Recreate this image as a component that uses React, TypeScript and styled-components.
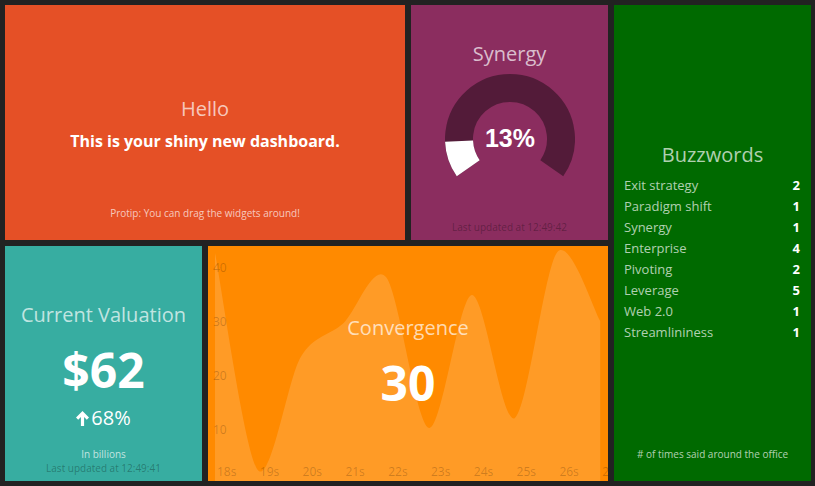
import React from 'react';
import styled, { createGlobalStyle } from 'styled-components';

const GlobalStyle = createGlobalStyle`
  html, body {
    margin: 0;
    background: #222;
  }

  body {
    font-family: "Open Sans", "Liberation Sans", sans-serif;
  }
`;

const Board = styled.div`
  box-sizing: border-box;
  display: grid;
  gap: 6px;
  grid-template-columns: repeat(4, 197px);
  grid-template-rows: repeat(2, 235px);
  min-height: 486px;
  padding: 5px;
`;

const Tile = styled.div<{ $bg: string; $col: string; $row: string }>`
  background-color: ${(p) => p.$bg};
  color: #fff;
  display: grid;
  grid-column: ${(p) => p.$col};
  grid-row: ${(p) => p.$row};
  grid-template-rows: 1fr auto 1fr;
  overflow: hidden;
  position: relative;
  text-align: center;
`;

const Content = styled.div<{ $offset?: number }>`
  grid-row: 2;
  padding-top: ${(p) => p.$offset || 0}px;
  position: relative;
  z-index: 1;
`;

const Title = styled.h1`
  color: rgba(255, 255, 255, 0.7);
  font-size: 20px;
  font-weight: 400;
  line-height: 24px;
  margin: 0;
`;

const Lead = styled.h2`
  font-size: 16px;
  font-weight: 700;
  line-height: 24px;
  margin: 8px 0 0;
`;

const BigValue = styled.div`
  font-size: 48px;
  font-weight: 700;
  line-height: 56px;
  margin-top: 15px;
`;

const Change = styled.div`
  align-items: center;
  display: flex;
  font-size: 20px;
  gap: 2px;
  justify-content: center;
  line-height: 24px;
  margin-top: 8px;
`;

const Footer = styled.div`
  align-self: end;
  display: flex;
  flex-direction: column;
  grid-row: 3;
  padding-bottom: 6px;
`;

const MoreInfo = styled.p`
  color: rgba(255, 255, 255, 0.7);
  font-size: 10px;
  line-height: 14px;
  margin: 0;
`;

const UpdatedAt = styled.p`
  color: rgba(0, 0, 0, 0.3);
  font-size: 10px;
  line-height: 14px;
  margin: 0;
  min-height: 14px;
`;

const Gauge = styled.svg`
  display: block;
  margin: 8px auto 0;
`;

const GaugeValue = styled.text`
  fill: #fff;
  font-family: "Liberation Sans", Arial, sans-serif;
  font-size: 25px;
  font-weight: 700;
`;

const List = styled.ul`
  list-style: none;
  margin: 8px 0 0;
  padding: 0 11px 0 10px;
  text-align: left;
`;

const ListRow = styled.li`
  display: flex;
  font-size: 13px;
  justify-content: space-between;
  line-height: 21px;
`;

const Label = styled.span`
  color: rgba(255, 255, 255, 0.7);
`;

const Count = styled.span`
  font-weight: 700;
`;

const Graph = styled.svg`
  inset: 0;
  position: absolute;
`;

const AxisText = styled.text`
  fill: rgba(0, 0, 0, 0.2);
  font-size: 12px;
`;

const buzzwords = [
  ['Exit strategy', 2],
  ['Paradigm shift', 1],
  ['Synergy', 1],
  ['Enterprise', 4],
  ['Pivoting', 2],
  ['Leverage', 5],
  ['Web 2.0', 1],
  ['Streamlininess', 1],
] as const;

const points = [42.6, 2.4, 23.3, 29.6, 38.1, 10.2, 34.8, 12, 42.8, 30];

const xAt = (i: number) => 7 + i * 42.8;
const yAt = (v: number) => 237 - 5.4 * v;

function areaPath(values: number[]) {
  const pts = values.map((v, i) => [xAt(i), yAt(v)]);
  let d = `M${pts[0][0]},${pts[0][1]}`;
  for (let i = 0; i < pts.length - 1; i += 1) {
    const p0 = pts[i - 1] || pts[i];
    const p1 = pts[i];
    const p2 = pts[i + 1];
    const p3 = pts[i + 2] || p2;
    const c1x = p1[0] + (p2[0] - p0[0]) * 0.15;
    const c1y = p1[1] + (p2[1] - p0[1]) * 0.15;
    const c2x = p2[0] - (p3[0] - p1[0]) * 0.15;
    const c2y = p2[1] - (p3[1] - p1[1]) * 0.15;
    d += ` C${c1x},${c1y} ${c2x},${c2y} ${p2[0]},${p2[1]}`;
  }
  const last = pts[pts.length - 1];
  return `${d} L${last[0]},235 L${pts[0][0]},235 Z`;
}

function arc(r: number, from: number, to: number) {
  const rad = (a: number) => (a * Math.PI) / 180;
  const x1 = 65 + r * Math.sin(rad(from));
  const y1 = 65 - r * Math.cos(rad(from));
  const x2 = 65 + r * Math.sin(rad(to));
  const y2 = 65 - r * Math.cos(rad(to));
  const large = to - from > 180 ? 1 : 0;
  return `M${x1},${y1} A${r},${r} 0 ${large} 1 ${x2},${y2}`;
}

function Meter({ value }: { value: number }) {
  const end = -125 + (250 * value) / 100;
  return (
    <Gauge width="130" height="130" viewBox="0 0 130 130">
      <path d={arc(51, -125, 125)} fill="none" stroke="rgba(0,0,0,0.4)" strokeWidth="28" />
      <path d={arc(51, -125, end)} fill="none" stroke="#fff" strokeWidth="28" />
      <GaugeValue x="65" y="64" textAnchor="middle" dominantBaseline="central">
        {value}%
      </GaugeValue>
    </Gauge>
  );
}

const ArrowUp = () => (
  <svg width="13" height="15" viewBox="0 0 13 15">
    <path d="M6.5 0 L13 6.6 L10.8 8.8 L8.1 6.1 V15 H4.9 V6.1 L2.2 8.8 L0 6.6 Z" fill="#fff" />
  </svg>
);

function ConvergenceGraph() {
  return (
    <Graph width="400" height="235" viewBox="0 0 400 235">
      <path d={areaPath(points)} fill="rgba(255,255,255,0.15)" />
      {[40, 30, 20, 10].map((v) => (
        <AxisText key={v} x="5" y={yAt(v)} dominantBaseline="central">
          {v}
        </AxisText>
      ))}
      {points.map((_, i) => (
        <AxisText key={i} x={xAt(i) + 2} y="225" dominantBaseline="central">
          {`${18 + i}s`}
        </AxisText>
      ))}
    </Graph>
  );
}

export default function App() {
  return (
    <>
      <GlobalStyle />
      <Board>
        <Tile $bg="#e55026" $col="1 / 3" $row="1">
          <Content $offset={4}>
            <Title>Hello</Title>
            <Lead>This is your shiny new dashboard.</Lead>
          </Content>
          <Footer>
            <MoreInfo>Protip: You can drag the widgets around!</MoreInfo>
            <UpdatedAt />
          </Footer>
        </Tile>

        <Tile $bg="#8b2d5f" $col="3" $row="1">
          <Content>
            <Title>Synergy</Title>
            <Meter value={13} />
          </Content>
          <Footer>
            <UpdatedAt>Last updated at 12:49:42</UpdatedAt>
          </Footer>
        </Tile>

        <Tile $bg="#006a00" $col="4" $row="1 / 3">
          <Content>
            <Title>Buzzwords</Title>
            <List>
              {buzzwords.map(([label, count]) => (
                <ListRow key={label}>
                  <Label>{label}</Label>
                  <Count>{count}</Count>
                </ListRow>
              ))}
            </List>
          </Content>
          <Footer>
            <MoreInfo># of times said around the office</MoreInfo>
            <UpdatedAt />
          </Footer>
        </Tile>

        <Tile $bg="#37ada1" $col="1" $row="2">
          <Content $offset={6}>
            <Title>Current Valuation</Title>
            <BigValue>$62</BigValue>
            <Change>
              <ArrowUp />
              <span>68%</span>
            </Change>
          </Content>
          <Footer>
            <MoreInfo>In billions</MoreInfo>
            <UpdatedAt>Last updated at 12:49:41</UpdatedAt>
          </Footer>
        </Tile>

        <Tile $bg="#ff8a00" $col="2 / 4" $row="2">
          <ConvergenceGraph />
          <Content>
            <Title>Convergence</Title>
            <BigValue>30</BigValue>
          </Content>
        </Tile>
      </Board>
    </>
  );
}
